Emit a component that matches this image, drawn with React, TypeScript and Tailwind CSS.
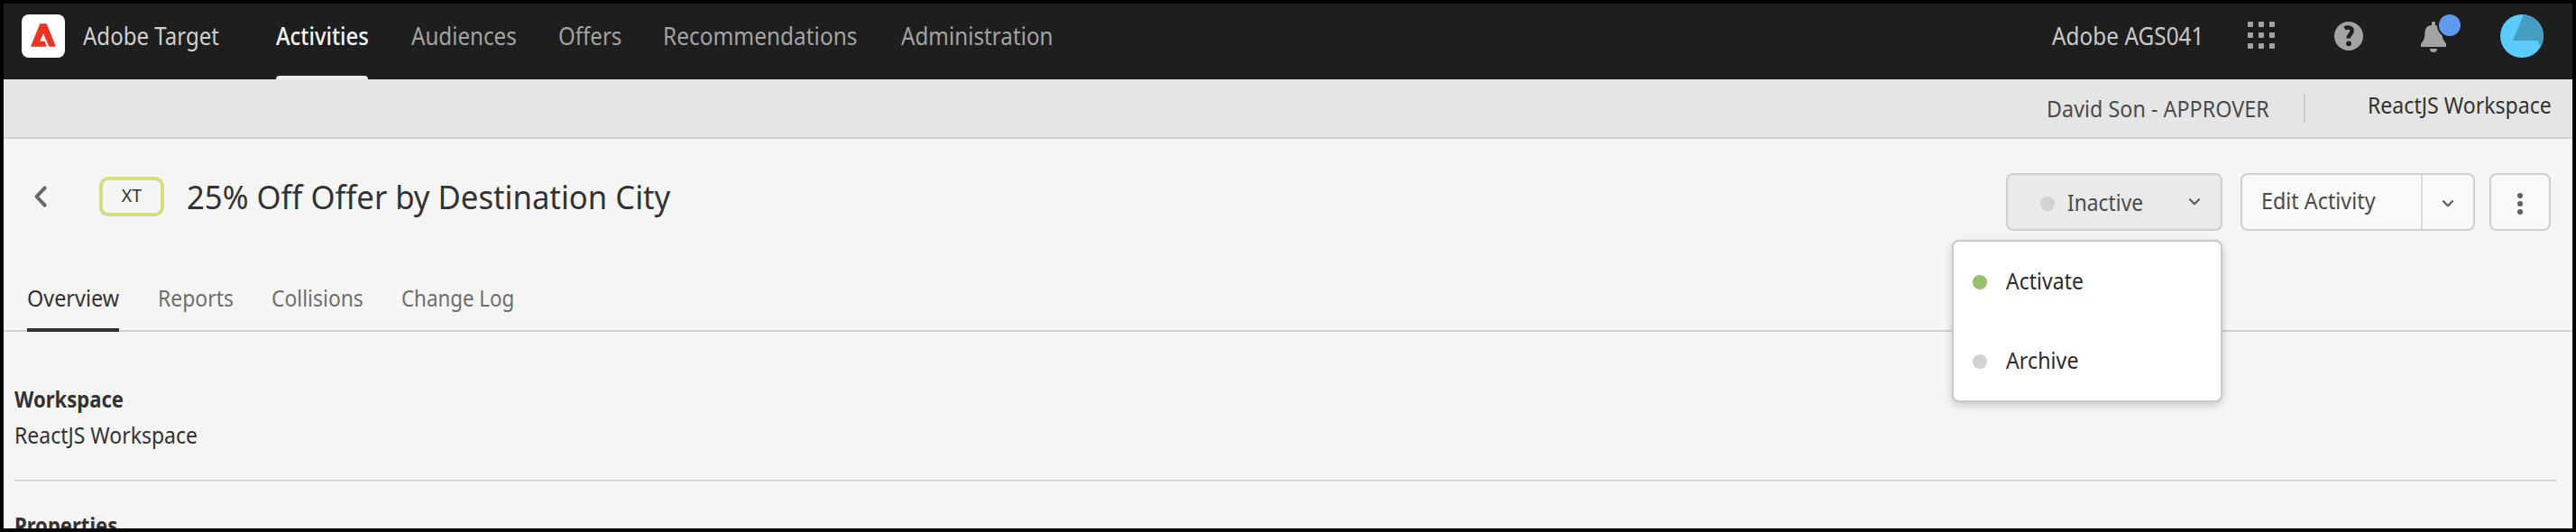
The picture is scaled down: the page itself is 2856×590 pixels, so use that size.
import type { ReactNode } from "react";

type LabelProps = { box: string; text: string; children: ReactNode };

/** Single-line text set slightly condensed inside a fixed-width box. */
function Label({ box, text, children }: LabelProps) {
  return (
    <span className={`block shrink-0 whitespace-nowrap ${box}`}>
      <span className={`inline-block origin-left ${text}`}>{children}</span>
    </span>
  );
}

const NAV = [
  { name: "Audiences", box: "w-[115px]", text: "scale-x-[.911]" },
  { name: "Offers", box: "w-[68px]", text: "scale-x-[.908]" },
  { name: "Recommendations", box: "w-[216px]", text: "scale-x-[.922]" },
  { name: "Administration", box: "w-[168px]", text: "scale-x-[.914]" },
];

const TABS = [
  { name: "Reports", box: "w-[83px]", text: "scale-x-[.936]" },
  { name: "Collisions", box: "w-[101px]", text: "scale-x-[.934]" },
  { name: "Change Log", box: "w-[126px]", text: "scale-x-[.911]" },
];

const GRID_STEPS = [0, 12, 24];

function AdobeLogo() {
  return (
    <span className="flex h-12 w-12 items-center justify-center rounded-lg bg-white">
      <svg width="28" height="26" viewBox="0 0 28 26" className="-mt-0.5 fill-[#eb3323]">
        <path d="M10.3.3h7.4L28 25.7h-7.7L14 11l-3.7 8.7h5.4l2 6H0z" />
      </svg>
    </span>
  );
}

function Chevron() {
  return (
    <svg width="14" height="10" viewBox="0 0 14 10" className="block fill-none stroke-[#5a5a5a] stroke-[2.2]" strokeLinecap="round" strokeLinejoin="round">
      <path d="M2 2.2l5 5 5-5" />
    </svg>
  );
}

function Header() {
  return (
    <header className="flex h-[84px] shrink-0 items-center bg-[#1e1e1e] pb-3 pl-5 pr-8 text-[26.5px] leading-10 text-[#a3a3a3]">
      <AdobeLogo />
      <Label box="ml-5 w-[150px] text-[#cfcfcf]" text="scale-x-[.907]">Adobe Target</Label>
      <nav className="ml-16 flex gap-12">
        <div className="relative flex h-[72px] items-center font-medium text-[#f5f5f5]">
          <Label box="w-[102px]" text="scale-x-[.9]">Activities</Label>
          <span className="absolute -bottom-3 left-0 h-1 w-full rounded-t-sm bg-[#efefef]" />
        </div>
        {NAV.map((item) => (
          <div key={item.name} className="flex items-center">
            <Label box={item.box} text={item.text}>{item.name}</Label>
          </div>
        ))}
      </nav>
      <Label box="ml-auto w-[167px] text-[#c8c8c8]" text="scale-x-[.92]">Adobe AGS041</Label>
      <svg width="30" height="30" viewBox="0 0 30 30" className="ml-[50px] -mt-0.5 fill-[#a3a3a3]">
        {GRID_STEPS.map((y) => GRID_STEPS.map((x) => <rect key={`${x}-${y}`} x={x} y={y} width="6" height="6" rx="1" />))}
      </svg>
      <svg width="32" height="32" viewBox="0 0 32 32" className="ml-[66px]">
        <circle cx="16" cy="16" r="16" className="fill-[#a3a3a3]" />
        <path d="M11.5 7.4C14.5 5.9 20.3 6 19.6 10.8 19.1 14 15.7 14.4 15.8 18.6" className="fill-none stroke-[#1e1e1e] stroke-[4.4]" />
        <circle cx="16" cy="24.3" r="2.9" className="fill-[#1e1e1e]" />
      </svg>
      <span className="relative ml-16 mt-0.5 block">
        <svg width="28" height="34" viewBox="0 0 28 34" className="fill-[#a3a3a3]">
          <path d="M12 1q0-1 1-1h2q1 0 1 1v3c5.5.8 7.2 4.500 7.400 9 .2 5.500 2.200 8.500 4.600 11.200V28H0v-3.400C2.800 21.500 4.200 19 4.400 14 4.600 8 6 4.300 12 4zM10 30h8a4 4 0 0 1-8 0z" />
        </svg>
        <span className="absolute -right-[18px] -top-[10px] h-7 w-7 rounded-full border-2 border-[#1e1e1e] bg-[#5f9bec]" />
      </span>
      <svg width="48" height="48" viewBox="0 0 48 48" className="ml-[60px]">
        <circle cx="24" cy="24" r="24" className="fill-[#5bccfb]" />
        <path d="M26 .1A24 24 0 0 1 44.400 36.500L41.500 29H14z" className="fill-[#469dc2]" />
      </svg>
    </header>
  );
}

function WorkspaceBar() {
  return (
    <div className="flex h-[66px] shrink-0 items-center justify-end border-b-2 border-[#cfcfcf] bg-[#e5e5e5] pr-[22px] text-[24.5px] leading-10">
      <Label box="mt-0.5 w-[246px] text-[#4b4b4b]" text="scale-x-[.953]">David Son - APPROVER</Label>
      <span className="ml-[39px] h-8 w-0.5 bg-[#cfcfcf]" />
      <Label box="ml-[69px] -mt-1.5 w-[205px] text-[#323232]" text="scale-x-[.942]">ReactJS Workspace</Label>
    </div>
  );
}

function StatusMenu() {
  return (
    <div className="absolute right-[-2px] top-[72px] z-10 flex h-[180px] w-[300px] flex-col rounded-lg border-2 border-[#cacaca] bg-white pl-[21px] text-[#2c2c2c] shadow-[0_3px_8px_rgba(0,0,0,0.2)]">
      <div className="flex h-[88px] items-center">
        <span className="mt-0.5 h-4 w-4 rounded-full bg-[#96bf69]" />
        <Label box="ml-[21px] w-[87px]" text="scale-x-[.94]">Activate</Label>
      </div>
      <div className="flex h-[88px] items-center">
        <span className="mt-0.5 h-4 w-4 rounded-full bg-[#d2d2d2]" />
        <Label box="ml-[21px] w-[87px]" text="scale-x-[.95]">Archive</Label>
      </div>
    </div>
  );
}

function Actions() {
  return (
    <div className="ml-auto flex text-[24.5px] leading-10 text-[#4b4b4b]">
      <div className="relative flex h-16 w-60 items-center rounded-lg border-2 border-[#cfcfcf] bg-[#eaeaea] pl-9">
        <span className="mt-1 h-4 w-4 rounded-full bg-[#d2d2d2]" />
        <Label box="ml-3.5 mt-0.5 w-[83px]" text="scale-x-[.93]">Inactive</Label>
        <span className="ml-[51px]"><Chevron /></span>
        <StatusMenu />
      </div>
      <div className="ml-5 flex h-16 w-[260px] rounded-lg border-2 border-[#cfcfcf] bg-[#fafafa]">
        <div className="flex w-[200px] items-center border-r-2 border-[#dedede] pb-0.5 pl-[21px]">
          <Label box="w-32" text="scale-x-[.952]">Edit Activity</Label>
        </div>
        <div className="flex flex-1 items-center justify-center pt-1"><Chevron /></div>
      </div>
      <div className="ml-4 flex h-16 w-[68px] flex-col items-center justify-center gap-[3px] rounded-lg border-2 border-[#cfcfcf] bg-[#fafafa] pt-1">
        <span className="h-1.5 w-1.5 rounded-full bg-[#5f5f5f]" />
        <span className="h-1.5 w-1.5 rounded-full bg-[#5f5f5f]" />
        <span className="h-1.5 w-1.5 rounded-full bg-[#5f5f5f]" />
      </div>
    </div>
  );
}

export default function App() {
  return (
    <div className="flex h-[590px] w-[2856px] flex-col overflow-hidden border-4 border-black bg-[#f5f5f5] font-['Noto_Sans',sans-serif] text-[#323232]">
      <Header />
      <WorkspaceBar />
      <section className="flex h-[140px] shrink-0 items-start pl-[34px] pr-6 pt-[38px]">
        <div className="flex h-[52px] items-center">
          <svg width="14" height="24" viewBox="0 0 14 24" className="fill-none stroke-[#686868] stroke-4" strokeLinecap="round" strokeLinejoin="round">
            <path d="M11.600 2.400L2.600 12l9 9.600" />
          </svg>
          <span className="ml-[58px] flex h-11 w-[72px] items-center justify-center rounded-[10px] border-4 border-[#d6dc80] pb-0.5 text-[19.5px] leading-8 text-[#323232]">XT</span>
          <Label box="ml-[25px] w-[540px] text-[37px] leading-[52px]" text="scale-x-[.937]">25% Off Offer by Destination City</Label>
        </div>
        <Actions />
      </section>
      <nav className="flex h-[74px] shrink-0 gap-[43px] border-b-2 border-[#cfcfcf] pl-[26px] text-[24.5px] leading-10 text-[#6e6e6e]">
        <div className="relative flex items-center pt-0.5 text-[#323232]">
          <Label box="w-[102px]" text="scale-x-[.955]">Overview</Label>
          <span className="absolute -bottom-0.5 left-0 h-1 w-full bg-[#323232]" />
        </div>
        {TABS.map((tab) => (
          <div key={tab.name} className="flex items-center pt-0.5">
            <Label box={tab.box} text={tab.text}>{tab.name}</Label>
          </div>
        ))}
      </nav>
      <main className="pl-3 pr-[18px] pt-[55px] text-[24.5px] leading-10">
        <section className="border-b-2 border-[#d6d6d6] pb-[29px]">
          <Label box="w-[136px] font-bold" text="scale-x-[.9]">Workspace</Label>
          <Label box="w-[206px]" text="scale-x-[.938]">ReactJS Workspace</Label>
        </section>
        <section className="pt-[29px]">
          <Label box="w-[130px] font-bold" text="scale-x-[.9]">Properties</Label>
        </section>
      </main>
    </div>
  );
}
